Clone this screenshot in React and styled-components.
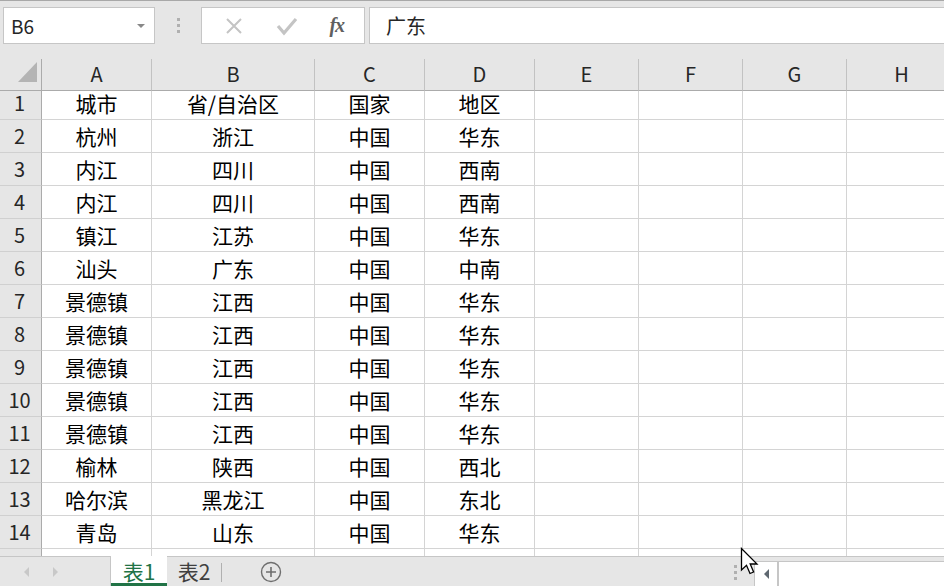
import React from 'react'
import styled, { createGlobalStyle } from 'styled-components'

const Global = createGlobalStyle`
  html, body { margin: 0; padding: 0; background: #fff; }
  body { font-family: "Noto Sans CJK SC", "Noto Sans", sans-serif; }
`

const COLS = [
  { key: 'A', w: 110 },
  { key: 'B', w: 163 },
  { key: 'C', w: 110 },
  { key: 'D', w: 110 },
  { key: 'E', w: 104 },
  { key: 'F', w: 104 },
  { key: 'G', w: 104 },
  { key: 'H', w: 110 },
]

const ROWS = [
  ['城市', '省/自治区', '国家', '地区'],
  ['杭州', '浙江', '中国', '华东'],
  ['内江', '四川', '中国', '西南'],
  ['内江', '四川', '中国', '西南'],
  ['镇江', '江苏', '中国', '华东'],
  ['汕头', '广东', '中国', '中南'],
  ['景德镇', '江西', '中国', '华东'],
  ['景德镇', '江西', '中国', '华东'],
  ['景德镇', '江西', '中国', '华东'],
  ['景德镇', '江西', '中国', '华东'],
  ['景德镇', '江西', '中国', '华东'],
  ['榆林', '陕西', '中国', '西北'],
  ['哈尔滨', '黑龙江', '中国', '东北'],
  ['青岛', '山东', '中国', '华东'],
  ['青岛', '山东', '中国', '华东'],
]

const template = `42px ${COLS.map(c => c.w + 'px').join(' ')}`

const Window = styled.div`
  position: relative;
  width: 944px;
  height: 586px;
  overflow: hidden;
  display: flex;
  flex-direction: column;
  background: #e6e6e6;
`

// ***** formula bar *****
const Toolbar = styled.div`
  height: 59px;
  box-sizing: border-box;
  border-top: 1px solid #a8a8a8;
  display: flex;
  align-items: flex-start;
  padding: 6px 0 0 3px;
  flex-shrink: 0;
`
const NameBox = styled.div`
  width: 152px;
  height: 37px;
  box-sizing: border-box;
  background: #fff;
  border: 1px solid #c6c6c6;
  display: flex;
  align-items: center;
  justify-content: space-between;
  padding: 0 9px 0 7px;
  font-size: 19px;
  color: #262626;
`
const Caret = styled.span`
  width: 0;
  height: 0;
  border-left: 4px solid transparent;
  border-right: 4px solid transparent;
  border-top: 4px solid #888;
`
const Grip = styled.div`
  width: 46px;
  height: 37px;
  display: flex;
  flex-direction: column;
  align-items: center;
  justify-content: center;
  gap: 3px;
  span {
    width: 3px;
    height: 3px;
    background: #b0b0b0;
  }
`
const ButtonBox = styled.div`
  width: 164px;
  height: 37px;
  box-sizing: border-box;
  background: #fff;
  border: 1px solid #c6c6c6;
  display: flex;
  align-items: center;
  justify-content: space-around;
  padding: 0 4px 0 6px;
`
const Fx = styled.span`
  font-family: "Liberation Serif", serif;
  font-style: italic;
  font-weight: bold;
  font-size: 20px;
  color: #606060;
  letter-spacing: -1px;
`
const FormulaInput = styled.div`
  flex: 1;
  margin-left: 4px;
  height: 37px;
  box-sizing: border-box;
  background: #fff;
  border: 1px solid #c6c6c6;
  border-right: none;
  display: flex;
  align-items: center;
  padding-left: 16px;
  font-size: 20px;
  color: #262626;
`

// ***** sheet *****
const Sheet = styled.div`
  flex: 1;
  overflow: hidden;
  background: #fff;
`
const Row = styled.div`
  display: grid;
  grid-template-columns: ${template};
  height: ${p => (p.$head ? 28 : 33)}px;
`
const HeadCell = styled.div`
  box-sizing: border-box;
  background: #e6e6e6;
  border-bottom: 1px solid #ababab;
  border-right: 1px solid ${p => (p.$corner ? '#ababab' : '#c2c2c2')};
  display: flex;
  align-items: center;
  justify-content: center;
  font-size: 20px;
  color: #262626;
  position: relative;
`
const ColLetter = styled(HeadCell)`
  padding-bottom: 2px;
`
const RowNum = styled.div`
  box-sizing: border-box;
  background: #e6e6e6;
  border-right: 1px solid #ababab;
  border-bottom: 1px solid #d0d0d0;
  display: flex;
  align-items: center;
  justify-content: center;
  padding: 0 2px 1px 0;
  font-size: 20px;
  color: #262626;
`
const Cell = styled.div`
  box-sizing: border-box;
  border-right: 1px solid #d4d4d4;
  border-bottom: 1px solid #d4d4d4;
  display: flex;
  align-items: center;
  justify-content: center;
  padding-bottom: 1px;
  font-size: 21px;
  color: #000;
  white-space: nowrap;
`
const Corner = styled.svg`
  position: absolute;
  left: 17px;
  top: 2px;
`

// ***** sheet tabs *****
const TabBar = styled.div`
  height: 30px;
  box-sizing: border-box;
  border-top: 1px solid #c6c6c6;
  display: flex;
  align-items: stretch;
  flex-shrink: 0;
  background: #e6e6e6;
`
const Nav = styled.div`
  width: 111px;
  box-sizing: border-box;
  border-right: 1px solid #c6c6c6;
  display: flex;
  align-items: center;
  padding-left: 24px;
  gap: 24px;
`
const Tri = styled.span`
  width: 0;
  height: 0;
  border-top: 5px solid transparent;
  border-bottom: 5px solid transparent;
  ${p => (p.$left ? 'border-right' : 'border-left')}: 5px solid ${p => p.$color || '#c8c8c8'};
`
const Tab = styled.div`
  width: ${p => p.$w}px;
  box-sizing: border-box;
  display: flex;
  align-items: center;
  justify-content: center;
  font-size: 21px;
  margin-top: -1px;
  background: ${p => (p.$active ? '#fff' : 'transparent')};
  color: ${p => (p.$active ? '#217346' : '#404040')};
  border-bottom: ${p => (p.$active ? '3px solid #217346' : 'none')};
  padding-top: ${p => (p.$active ? '2px' : '0')};
`
const TabSep = styled.div`
  width: 1px;
  background: #b0b0b0;
  margin: 6px 0 4px;
`
const AddBtn = styled.div`
  margin-left: 38px;
  display: flex;
  align-items: center;
`
const Spacer = styled.div`
  flex: 1;
`
const Dots = styled(Grip)`
  width: 20px;
  height: auto;
  gap: 3px;
  margin: 2px 9px 0 0;
`
const Scroll = styled.div`
  width: 190px;
  margin-top: 4px;
  box-sizing: border-box;
  background: #fff;
  border: 1px solid #c6c6c6;
  border-right: none;
  border-bottom: none;
  display: flex;
`
const ScrollBtn = styled.div`
  width: 24px;
  box-sizing: border-box;
  border-right: 2px solid #c6c6c6;
  display: flex;
  align-items: center;
  justify-content: center;
`
const Pointer = styled.svg`
  position: absolute;
  left: 740px;
  top: 547px;
`

export default function App() {
  return (
    <Window>
      <Global />
      <Toolbar>
        <NameBox>
          B6
          <Caret />
        </NameBox>
        <Grip>
          <span />
          <span />
          <span />
        </Grip>
        <ButtonBox>
          <svg width="20" height="20" viewBox="0 0 20 20">
            <path d="M3 3 L17 17 M17 3 L3 17" stroke="#c4c4c4" strokeWidth="2" fill="none" />
          </svg>
          <svg width="22" height="20" viewBox="0 0 22 20">
            <path d="M2 10 L8 17 L20 3" stroke="#c4c4c4" strokeWidth="3.2" fill="none" />
          </svg>
          <Fx>fx</Fx>
        </ButtonBox>
        <FormulaInput>广东</FormulaInput>
      </Toolbar>

      <Sheet>
        <Row $head>
          <HeadCell $corner>
            <Corner width="21" height="22" viewBox="0 0 21 22">
              <polygon points="1,21 20,21 20,1" fill="#b4b4b4" />
            </Corner>
          </HeadCell>
          {COLS.map(c => (
            <ColLetter key={c.key}>{c.key}</ColLetter>
          ))}
        </Row>
        {ROWS.map((r, i) => (
          <Row key={i}>
            <RowNum>{i + 1}</RowNum>
            {COLS.map((c, j) => (
              <Cell key={c.key}>{r[j] || ''}</Cell>
            ))}
          </Row>
        ))}
      </Sheet>

      <TabBar>
        <Nav>
          <Tri $left />
          <Tri />
        </Nav>
        <Tab $active $w={56}>表1</Tab>
        <Tab $w={54}>表2</Tab>
        <TabSep />
        <AddBtn>
          <svg width="22" height="22" viewBox="0 0 22 22">
            <circle cx="11" cy="11" r="9.5" stroke="#6e6e6e" strokeWidth="1.4" fill="none" />
            <path d="M11 6 V16 M6 11 H16" stroke="#6e6e6e" strokeWidth="1.6" />
          </svg>
        </AddBtn>
        <Spacer />
        <Dots>
          <span />
          <span />
          <span />
        </Dots>
        <Scroll>
          <ScrollBtn>
            <Tri $left $color="#5f6870" />
          </ScrollBtn>
        </Scroll>
      </TabBar>

      <Pointer width="20" height="30" viewBox="0 0 20 30">
        <path
          d="M1.5 1.5 L1.5 23 L6.5 18.3 L10 26.5 L13.6 25 L10.2 17 L17 17 Z"
          fill="#fff"
          stroke="#000"
          strokeWidth="1.3"
          strokeLinejoin="miter"
        />
      </Pointer>
    </Window>
  )
}
